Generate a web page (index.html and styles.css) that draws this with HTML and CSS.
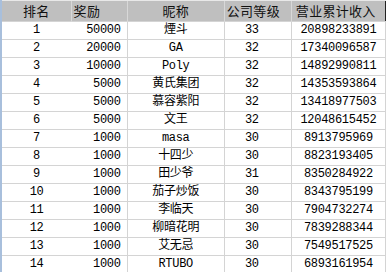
FILE: index.html
```html
<!DOCTYPE html>
<html lang="zh">
<head>
  <meta charset="UTF-8" />
  <title>排名</title>
  <link rel="stylesheet" href="styles.css">
</head>
<body>
  <table class="rank">
    <colgroup>
      <col class="c-rank"><col class="c-prize"><col class="c-name"><col class="c-level"><col class="c-income">
    </colgroup>
    <thead>
      <tr>
        <th>排名</th>
        <th class="left">奖励</th>
        <th>昵称</th>
        <th class="left">公司等级</th>
        <th class="left">营业累计收入</th>
      </tr>
    </thead>
    <tbody>
      <tr><td>1</td><td class="num">50000</td><td>煙斗</td><td class="lvl">33</td><td>20898233891</td></tr>
      <tr><td>2</td><td class="num">20000</td><td>GA</td><td class="lvl">32</td><td>17340096587</td></tr>
      <tr><td>3</td><td class="num">10000</td><td>Poly</td><td class="lvl">32</td><td>14892990811</td></tr>
      <tr><td>4</td><td class="num">5000</td><td>黄氏集团</td><td class="lvl">32</td><td>14353593864</td></tr>
      <tr><td>5</td><td class="num">5000</td><td>慕容紫阳</td><td class="lvl">32</td><td>13418977503</td></tr>
      <tr><td>6</td><td class="num">5000</td><td>文王</td><td class="lvl">32</td><td>12048615452</td></tr>
      <tr><td>7</td><td class="num">1000</td><td>masa</td><td class="lvl">30</td><td>8913795969</td></tr>
      <tr><td>8</td><td class="num">1000</td><td>十四少</td><td class="lvl">30</td><td>8823193405</td></tr>
      <tr><td>9</td><td class="num">1000</td><td>田少爷</td><td class="lvl">31</td><td>8350284922</td></tr>
      <tr><td>10</td><td class="num">1000</td><td>茄子炒饭</td><td class="lvl">30</td><td>8343795199</td></tr>
      <tr><td>11</td><td class="num">1000</td><td>李临天</td><td class="lvl">30</td><td>7904732274</td></tr>
      <tr><td>12</td><td class="num">1000</td><td>柳暗花明</td><td class="lvl">30</td><td>7839288344</td></tr>
      <tr><td>13</td><td class="num">1000</td><td>艾无忌</td><td class="lvl">30</td><td>7549517525</td></tr>
      <tr><td>14</td><td class="num">1000</td><td>RTUBO</td><td class="lvl">30</td><td>6893161954</td></tr>
    </tbody>
  </table>
</body>
</html>
```

FILE: styles.css
```css
body {
  margin: 0;
  background: #fff;
}

.rank {
  border-collapse: collapse;
  table-layout: fixed;
  width: 386px;
  border-left: 2px solid #a8bfdc;
  border-right: 1px solid #222;
  font-family: "Liberation Mono", "Noto Sans CJK SC", monospace;
  font-size: 12px;
  letter-spacing: -0.3px;
  color: #000;
}

.c-rank { width: 70px; }
.c-prize { width: 56px; }
.c-name { width: 97px; }
.c-level { width: 67px; }
.c-income { width: 94px; }

th {
  height: 20px;
  padding: 0;
  background: #bfbfbf;
  border-top: 1px solid #e8e8e8;
  border-left: 1px solid #d8d8d8;
  font-family: "Noto Sans CJK SC", sans-serif;
  font-weight: normal;
  font-size: 13px;
  letter-spacing: 0.3px;
  line-height: 18px;
  color: #111;
  text-align: center;
}

th.left {
  text-align: left;
  padding-left: 2px;
}

th:last-child {
  padding-left: 4px;
}

td {
  height: 17px;
  padding: 0;
  border: 1px solid #d4d4d4;
  text-align: center;
  line-height: 17px;
  white-space: nowrap;
}

td:first-child {
  border-right: none;
}

td.num {
  border-left: none;
  text-align: right;
  padding-right: 6px;
}

td.lvl {
  padding-right: 12px;
}
```
